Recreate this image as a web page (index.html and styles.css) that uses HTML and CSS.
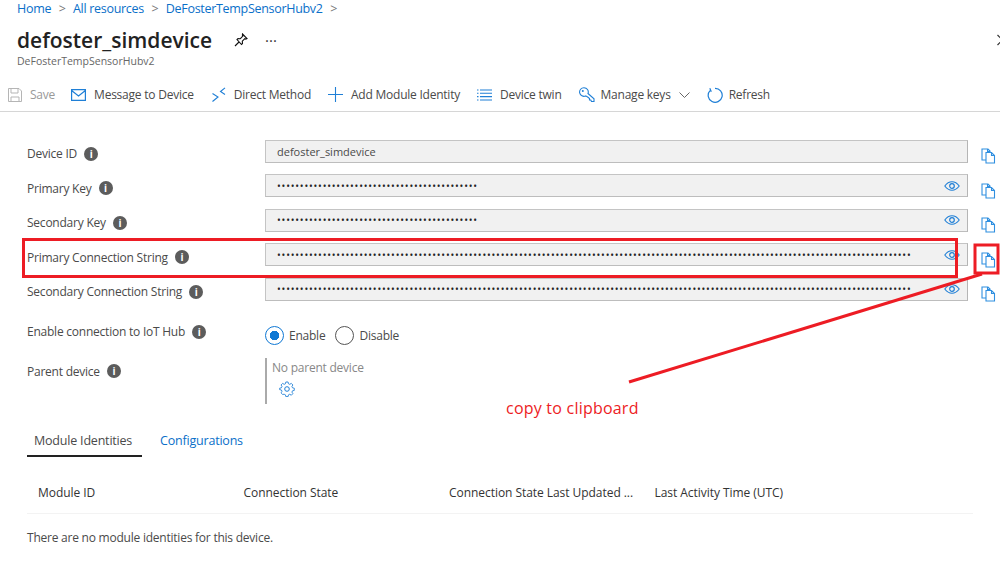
FILE: index.html
```html
<!doctype html>
<html lang="en">
<head>
	<meta charset="utf-8">
	<meta name="viewport" content="width=device-width, initial-scale=1.0">
	<title>defoster_simdevice</title>
	<link rel="stylesheet" href="styles.css">
</head>
<body>
	<svg class="defs" width="0" height="0">
		<symbol id="i-copy" viewBox="0 0 15 16">
			<path d="M1 1h6l2 2v9H1zM6.500 1v2.500H9" fill="#fff" stroke="#2f8fe0" stroke-width="1.100"/>
			<path d="M5 4.500h5.500l3 3V15H5zM10.500 4.500V7.500h3" fill="#fff" stroke="#2f8fe0" stroke-width="1.100"/>
		</symbol>
		<symbol id="i-eye" viewBox="0 0 16 10">
			<path d="M.8 5C3 2 5.500.8 8 .8S13 2 15.200 5C13 8 10.500 9.200 8 9.200S3 8 .8 5z" fill="none" stroke="#1f7fd6" stroke-width="1.100"/>
			<circle cx="8" cy="5" r="2.300" fill="none" stroke="#1f7fd6" stroke-width="1.200"/>
		</symbol>
	</svg>

	<nav class="crumbs">
		<a>Home</a><span class="sep">&gt;</span>
		<a>All resources</a><span class="sep">&gt;</span>
		<a>DeFosterTempSensorHubv2</a><span class="sep">&gt;</span>
	</nav>

	<header class="head">
		<div class="title-row">
			<h1>defoster_simdevice</h1>
			<svg class="pin" width="14" height="14" viewBox="0 0 14 14"><path d="M8.500 1l4.500 4.500-1.200.6-1-.4-2.500 2.500.2 2.300-1 1L3 6.500l1-1 2.300.2L8.800 3.200l-.4-1zM5 9l-4 4" fill="none" stroke="#111" stroke-width="1.100"/></svg>
			<span class="more">&middot;&middot;&middot;</span>
			<svg class="close" width="6" height="12" viewBox="0 0 6 12"><path d="M.5 1l5 5-5 5" fill="none" stroke="#333" stroke-width="1.200"/></svg>
		</div>
		<div class="sub">DeFosterTempSensorHubv2</div>
	</header>

	<div class="toolbar">
		<span class="tool off save">
			<svg width="14" height="14" viewBox="0 0 14 14"><path d="M.5.500h10.500l2.500 2.500v10.500H.5zM3 .5v4.500h7V.5M3 13.500V9h8v4.500" fill="none" stroke="#b5b5b5"/></svg>
			Save
		</span>
		<span class="tool message">
			<svg width="15" height="12" viewBox="0 0 15 12"><path d="M.6.600h13.800v10.800H.6zM.6 1.500L7.500 7l6.900-5.500" fill="none" stroke="#1f7fd6" stroke-width="1.200"/></svg>
			Message to Device
		</span>
		<span class="tool">
			<svg width="14" height="15" viewBox="0 0 14 15"><path d="M.5 6.500L6 10l-5.500 4.500M13 .8L8.500 4.500l4.500 3" fill="none" stroke="#1f7fd6" stroke-width="1.100"/></svg>
			Direct Method
		</span>
		<span class="tool">
			<svg width="15" height="15" viewBox="0 0 15 15"><path d="M7.500 0v15M0 7.500h15" stroke="#1f7fd6" stroke-width="1.100"/></svg>
			Add Module Identity
		</span>
		<span class="tool">
			<svg width="15" height="12" viewBox="0 0 15 12"><path d="M3 1h12M3 4.300h12M3 7.600h12M3 11h12M0 1h1.500M0 4.300h1.500M0 7.600h1.500M0 11h1.500" stroke="#1f7fd6" stroke-width="1.100"/></svg>
			Device twin
		</span>
		<span class="tool tight">
			<svg width="16" height="16" viewBox="0 0 16 16"><path d="M5 .7a4.300 4.300 0 0 1 4 5.800l6 5.300v2.700h-2.500l-.7-1.500H10.500v-1.500L9 10.300 6.700 8.900A4.300 4.300 0 1 1 5 .7z" fill="none" stroke="#1f7fd6" stroke-width="1.100"/><circle cx="3.800" cy="4" r="1" fill="#1f7fd6"/></svg>
			Manage keys
			<svg class="chev" width="11" height="6" viewBox="0 0 11 6"><path d="M.5.500l5 5 5-5" fill="none" stroke="#666"/></svg>
		</span>
		<span class="tool tight">
			<svg width="16" height="16" viewBox="0 0 16 16"><path d="M8 1.300A7 7 0 1 1 3 3.600M2.800 1.200L4.300 4.700" fill="none" stroke="#1f7fd6" stroke-width="1.200"/></svg>
			Refresh
		</span>
	</div>

	<main class="form">
		<div class="row">
			<label>Device ID <i class="info">i</i></label>
			<div class="field">defoster_simdevice</div>
			<svg class="copy" width="15" height="16"><use href="#i-copy"/></svg>
		</div>
		<div class="row">
			<label>Primary Key <i class="info">i</i></label>
			<div class="field secret"><span class="dots">••••••••••••••••••••••••••••••••••••••••••••</span><svg width="16" height="10"><use href="#i-eye"/></svg></div>
			<svg class="copy" width="15" height="16"><use href="#i-copy"/></svg>
		</div>
		<div class="row">
			<label>Secondary Key <i class="info">i</i></label>
			<div class="field secret"><span class="dots">••••••••••••••••••••••••••••••••••••••••••••</span><svg width="16" height="10"><use href="#i-eye"/></svg></div>
			<svg class="copy" width="15" height="16"><use href="#i-copy"/></svg>
		</div>
		<div class="row">
			<label>Primary Connection String <i class="info">i</i></label>
			<div class="field secret"><span class="dots">-</span><svg width="16" height="10"><use href="#i-eye"/></svg></div>
			<svg class="copy" width="15" height="16"><use href="#i-copy"/></svg>
		</div>
		<div class="row">
			<label>Secondary Connection String <i class="info">i</i></label>
			<div class="field secret"><span class="dots">-</span><svg width="16" height="10"><use href="#i-eye"/></svg></div>
			<svg class="copy" width="15" height="16"><use href="#i-copy"/></svg>
		</div>

		<div class="row row-enable">
			<label>Enable connection to IoT Hub <i class="info">i</i></label>
			<div class="radios">
				<span class="radio on"></span><span class="radio-text">Enable</span>
				<span class="radio"></span><span class="radio-text">Disable</span>
			</div>
		</div>

		<div class="row row-parent">
			<label>Parent device <i class="info">i</i></label>
			<div class="parent">
				<div class="none">No parent device</div>
				<svg width="16" height="16" viewBox="0 0 16 16"><path d="M6.700.8h2.600l.4 2 1.500.7 1.800-1.100 1.800 1.800-1.100 1.800.7 1.500 2 .4v2.600l-2 .4-.7 1.500 1.100 1.800-1.800 1.800-1.800-1.100-1.500.7-.4 2H6.700l-.4-2-1.500-.7L3 15.100 1.200 13.300l1.100-1.800-.7-1.500-2-.4" transform="translate(1 .3) scale(.87)" fill="none" stroke="#1f7fd6"/><path d="M6.700.8l-.4 2-1.500.7L3 2.400 1.200 4.200l1.100 1.800-.7 1.500-2 .4v1.700" transform="translate(1 .3) scale(.87)" fill="none" stroke="#1f7fd6"/><circle cx="8" cy="8" r="2.300" fill="none" stroke="#1f7fd6"/></svg>
			</div>
		</div>

		<div class="tabs">
			<span class="tab active">Module Identities</span>
			<span class="tab">Configurations</span>
		</div>

		<div class="thead">
			<span>Module ID</span>
			<span>Connection State</span>
			<span>Connection State Last Updated ...</span>
			<span>Last Activity Time (UTC)</span>
		</div>
		<p class="empty">There are no module identities for this device.</p>
	</main>

	<!-- annotations drawn over the screenshot -->
	<svg class="marks" width="1000" height="568">
		<rect x="23.500" y="239.500" width="933" height="37" fill="none" stroke="#ed1c24" stroke-width="3"/>
		<rect x="975" y="245" width="23" height="28" fill="none" stroke="#ed1c24" stroke-width="3"/>
		<path d="M982 274L629 382" stroke="#ed1c24" stroke-width="3"/>
	</svg>
	<div class="note">copy to clipboard</div>

	<script>
		// 139 dots is too long to keep in the markup twice
		var long = document.querySelectorAll(".dots");
		long[2].textContent = long[3].textContent = new Array(140).join("•");
	</script>
</body>
</html>
```
FILE: styles.css
```css
* {
	box-sizing: border-box;
}
body {
	margin: 0;
	height: 568px;
	overflow: hidden;
	position: relative;
	background: #fff;
	color: #4a4a4a;
	font-family: "Open Sans", "Noto Sans", sans-serif;
	font-size: 12px;
	letter-spacing: -.23px;
}
.defs {
	position: absolute;
}

.crumbs {
	display: flex;
	align-items: center;
	height: 17px;
	padding-left: 17px;
	color: #0a6fc9;
	font-size: 12.500px;
	letter-spacing: -.3px;
}
.crumbs .sep {
	margin: 0 7.500px;
	color: #777;
}

.head {
	padding: 11px 0 0 17px;
	height: 61px;
}
.title-row {
	display: flex;
	align-items: center;
	height: 24px;
}
h1 {
	margin: 0;
	width: 217px;
	color: #222;
	font-size: 21px;
	font-weight: 600;
	letter-spacing: 0;
	line-height: 24px;
}
.more {
	margin-left: 17px;
	color: #333;
	font-size: 15px;
	letter-spacing: 0;
}
.close {
	margin-left: auto;
	margin-right: -3px;
}
.sub {
	margin-top: 2px;
	color: #666;
	font-size: 10.500px;
	letter-spacing: 0;
	line-height: 14px;
}

.toolbar {
	display: flex;
	align-items: center;
	height: 34px;
	padding-left: 8px;
	border-bottom: 1px solid #d6d6d6;
}
.tool {
	display: flex;
	align-items: center;
	gap: 8px;
	margin-right: 17px;
	white-space: nowrap;
}
.tool.save {
	margin-right: 16px;
}
.tool.message {
	margin-right: 18px;
}
.tool.tight {
	gap: 6px;
}
.tool.off {
	color: #999;
}
.tool .chev {
	margin-left: 2px;
}

.form {
	padding: 21px 0 0 27px;
}
.row {
	display: grid;
	grid-template-columns: 238px 703px 15px;
	align-items: center;
	height: 34.500px;
}
.row > .copy {
	margin-left: 13px;
	margin-top: 12px;
}
.row label {
	display: flex;
	align-items: center;
	gap: 7px;
	margin-top: 7px;
}
.info {
	display: inline-flex;
	justify-content: center;
	align-items: center;
	width: 14px;
	height: 14px;
	border-radius: 50%;
	background: #5c5c5c;
	color: #fff;
	font-size: 10px;
	font-style: normal;
	font-weight: 700;
}
.field {
	display: flex;
	align-items: center;
	justify-content: space-between;
	height: 23px;
	margin-top: 2px;
	padding: 0 7px 0 11px;
	background: #f1f1f1;
	border: 1px solid #bbb;
	border-color: #c4c4c4 #b5b5b5 #bdbdbd #c4c4c4;
	font-size: 11px;
	letter-spacing: 0;
}
.dots {
	color: #222;
	font-size: 10px;
	letter-spacing: .805px;
	white-space: nowrap;
}

.row-enable {
	height: 52px;
}
.row-enable label {
	margin-top: 0;
}
.radios {
	display: flex;
	align-items: center;
	margin-top: 7px;
}
.radio {
	width: 19px;
	height: 19px;
	border: 1px solid #555;
	border-radius: 50%;
	background: #fff;
}
.radio.on {
	border-color: #0f78d4;
	background: radial-gradient(circle, #0f78d4 0 4.500px, #fff 5px);
}
.radio-text {
	margin: 0 10px 0 5px;
}
.row-parent {
	height: 54px;
	align-items: start;
}
.row-parent label {
	margin-top: 5px;
}
.parent {
	height: 46px;
	padding-left: 5px;
	border-left: 2px solid #aaa;
}
.parent .none {
	margin-top: 1px;
	color: #888;
	line-height: 17px;
}
.parent svg {
	display: block;
	margin: 5px 0 0 7px;
}

.tabs {
	display: flex;
	gap: 11px;
	margin-top: 15px;
	height: 30px;
	font-size: 12.500px;
	letter-spacing: -.2px;
}
.tab {
	padding: 0 7px;
	line-height: 28px;
	color: #0a6fc9;
}
.tab.active {
	width: 115px;
	border-bottom: 2px solid #222;
	color: #4a4a4a;
	white-space: nowrap;
}

.thead {
	display: grid;
	grid-template-columns: 205.500px 205.500px 205.500px 1fr;
	align-items: center;
	width: 946px;
	height: 56px;
	margin-top: 1px;
	padding: 14px 0 0 11px;
	border-bottom: 1px solid #f3f3f3;
	color: #333;
	font-weight: 500;
	font-size: 12px;
	letter-spacing: -.05px;
	white-space: nowrap;
}
.empty {
	margin: 15px 0 0;
	line-height: 17px;
}

.marks {
	position: absolute;
	left: 0;
	top: 0;
	pointer-events: none;
}
.note {
	position: absolute;
	left: 506px;
	top: 398px;
	color: #ed1c24;
	font-size: 16px;
	letter-spacing: .22px;
	line-height: 20px;
}
```
